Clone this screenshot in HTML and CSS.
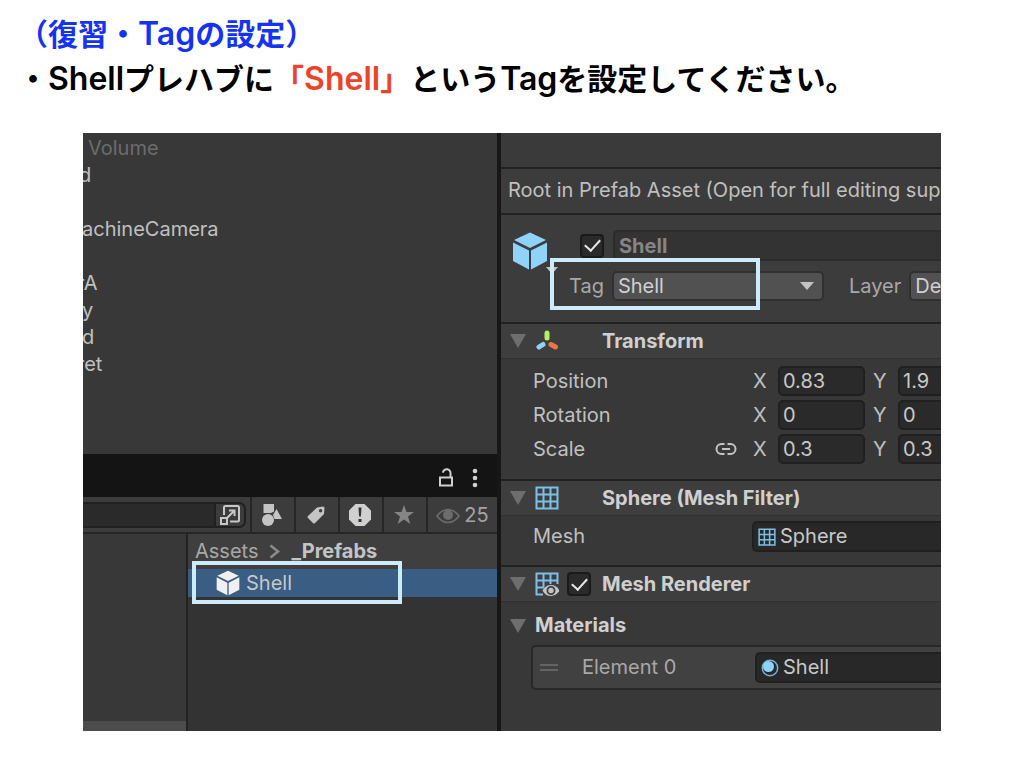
FILE: index.html
```html
<!DOCTYPE html>
<html lang="ja">
<head>
<meta charset="utf-8">
<title>復習・Tagの設定</title>
<link rel="stylesheet" href="styles.css">
</head>
<body>
<svg class="defs" aria-hidden="true">
  <symbol id="cube" viewBox="0 0 36 38">
    <path d="M18 0.5 34 8 18 16 2 8Z"/>
    <path d="M1 10.5 17 18.5V37.5L1 29Z"/>
    <path d="M35 10.5 19 18.5V37.5L35 29Z"/>
  </symbol>
  <symbol id="grid" viewBox="0 0 24 24">
    <path d="M1.5 1.5h21v21h-21zM8.5 1.5v21M15.5 1.5v21M1.5 8.5h21M1.5 15.5h21" fill="none" stroke="currentColor" stroke-width="2"/>
  </symbol>
</svg>
<header class="lesson">
  <h1 class="lesson-title">（復習・<span class="latin">Tag</span>の設定）</h1>
  <p class="lesson-text">・<span class="latin">Shell</span>プレハブに<em class="mark">「<span class="latin">Shell</span>」</em>という<span class="latin">Tag</span>を設定してください。</p>
</header>

<main class="editor">
  <div class="left">
    <ul class="hierarchy">
      <li class="dim">Volume</li>
      <li class="cut">d</li>
      <li></li>
      <li>achineCamera</li>
      <li></li>
      <li class="cut-more">rA</li>
      <li>y</li>
      <li>d</li>
      <li class="cut-more">ret</li>
    </ul>
    <div class="tabbar">
      <button class="plain" aria-label="Lock"><svg width="16" height="20" viewBox="0 0 16 20" fill="none" stroke="#d0d0d0" stroke-width="2"><path d="M2 9.5h12v8H2z"/><path d="M12.5 9V5.5a3.8 3.8 0 0 0-7.6-.8"/></svg></button>
      <button class="plain" aria-label="More"><svg width="6" height="20" viewBox="0 0 6 20" fill="#d0d0d0"><circle cx="3" cy="3" r="2.3"/><circle cx="3" cy="10" r="2.3"/><circle cx="3" cy="17" r="2.3"/></svg></button>
    </div>
    <div class="toolbar">
      <div class="search">
        <input type="search" aria-label="Search assets">
        <button class="plain" aria-label="Open search"><svg width="22" height="22" viewBox="0 0 22 22" fill="none" stroke="#c8c8c8" stroke-width="2"><path d="M5 11V3.500Q5 2 6.500 2H18.500Q20 2 20 3.500V16Q20 17.500 18.500 17.500H11M2 14h6v6H2zM8.500 13.500 15.500 6.500M10 6.500h5.500V12"/></svg></button>
      </div>
      <button class="tool" aria-label="Filter by type"><svg width="22" height="24" viewBox="0 0 22 24" fill="#c4c4c4"><path d="M2.500 1h10.500v7.500L10 10H2.500z"/><circle cx="7" cy="17" r="6"/><path d="M15.500 6 21 16h-7.500L12 12z"/></svg></button>
      <button class="tool" aria-label="Filter by label"><svg width="20" height="20" viewBox="0 0 20 20"><path fill="#c4c4c4" fill-rule="evenodd" d="M11 2.500 17 1.500Q18.500 1.500 18.500 3L18 9 9 18Q8 19 7 18L2 13Q1 12 2 11ZM14.500 4a1.700 1.700 0 1 0 .1 0Z"/></svg></button>
      <button class="tool" aria-label="Warnings"><svg width="24" height="24" viewBox="0 0 24 24"><path fill="#d0d0d0" d="M7.500 1h9L23 7.500v9L16.500 23h-9L1 16.500v-9z"/><path fill="#333" d="M10.500 4.500h3l-.6 9h-1.800zM10.500 16h3v3h-3z"/></svg></button>
      <button class="tool" aria-label="Favorites"><svg width="22" height="22" viewBox="0 0 22 22"><path fill="#858585" d="M11 1 13.500 8H21L15 12.500 17.300 20 11 15.500 4.700 20 7 12.500 1 8h7.500z"/></svg></button>
      <button class="tool hidden-count" aria-label="Hidden items"><svg width="24" height="16" viewBox="0 0 24 16"><path fill="none" stroke="#6c6c6c" stroke-width="1.700" d="M1 8Q6 1.500 12 1.500T23 8Q18 14.500 12 14.500T1 8Z"/><circle cx="12" cy="7" r="5" fill="#6c6c6c"/></svg>25</button>
    </div>
    <div class="project">
      <div class="folders"><div class="scrollbar"></div></div>
      <div class="assets">
        <nav class="crumbs"><a href="#">Assets</a><svg width="11" height="15" viewBox="0 0 11 15" fill="none" stroke="#8c8c8c" stroke-width="2.500"><path d="M1.500 1.500 9 7.500 1.500 13.500"/></svg><b>_Prefabs</b></nav>
        <div class="asset"><svg width="24" height="26" fill="#f0f0f0"><use href="#cube"/></svg>Shell</div>
        <div class="callout callout-asset"></div>
      </div>
    </div>
  </div>

  <div class="inspector">
    <div class="topstrip"></div>
    <p class="notice">Root in Prefab Asset (Open for full editing support)</p>
    <section class="object">
      <svg class="object-icon" width="36" height="38" fill="#8fd3fa"><use href="#cube"/></svg>
      <svg class="object-arrow" width="12" height="8" viewBox="0 0 12 8"><path fill="#c4c4c4" d="M0 0h12L6 7z"/></svg>
      <div class="name-row">
        <input type="checkbox" class="check" aria-label="Active" checked>
        <input type="text" class="name" aria-label="Name" value="Shell">
      </div>
      <div class="tag-row">
        <label for="tag">Tag</label>
        <span class="drop"><select id="tag"><option>Shell</option></select></span>
        <label for="layer">Layer</label>
        <span class="drop"><select id="layer"><option>Default</option></select></span>
      </div>
      <div class="callout callout-tag"></div>
    </section>

    <section class="component">
      <h2 class="head"><span class="fold"></span><svg width="24" height="24" viewBox="0 0 24 24" stroke-linecap="round" stroke-width="5"><path stroke="#b4f25c" d="M12 4v5"/><path stroke="#8fd3fa" d="M8 15.500 4 18"/><path stroke="#f0744a" d="M16 15.500 20.500 18"/></svg><span class="title">Transform</span></h2>
      <div class="vectors">
        <div class="vector"><span class="prop">Position</span><label for="px">X</label><input id="px" value="0.83"><label for="py">Y</label><input id="py" value="1.9"></div>
        <div class="vector"><span class="prop">Rotation</span><label for="rx">X</label><input id="rx" value="0"><label for="ry">Y</label><input id="ry" value="0"></div>
        <div class="vector"><span class="prop">Scale<svg width="22" height="14" viewBox="0 0 22 14" fill="none" stroke="#c4c4c4" stroke-width="2"><path d="M9.500 2H6.500a5 5 0 0 0 0 10h3M12.500 2h3a5 5 0 0 1 0 10h-3M7 7h8"/></svg></span><label for="sx">X</label><input id="sx" value="0.3"><label for="sy">Y</label><input id="sy" value="0.3"></div>
      </div>
    </section>

    <section class="component">
      <h2 class="head"><span class="fold"></span><svg class="blue" width="24" height="24"><use href="#grid"/></svg><span class="title">Sphere (Mesh Filter)</span></h2>
      <div class="mesh"><span>Mesh</span><button class="object-field"><svg class="blue" width="18" height="18"><use href="#grid"/></svg>Sphere</button></div>
    </section>

    <section class="component">
      <h2 class="head"><span class="fold"></span><svg class="blue" width="24" height="24" viewBox="0 0 24 24"><path d="M22.500 12V1.500h-21v21H8M8.500 1.500v14M15.500 1.500V12M1.500 8.500h21M1.500 15.500H9" fill="none" stroke="currentColor" stroke-width="2"/><path d="M7.500 18.500Q10.500 13 16 13T24.500 18.500Q21.500 24 16 24T7.500 18.500Z" fill="#c4c4c4"/><circle cx="16" cy="18.500" r="3.600" fill="#c4c4c4" stroke="#3e3e3e" stroke-width="1.800"/></svg><input type="checkbox" class="check" aria-label="Mesh Renderer enabled" checked><span class="title">Mesh Renderer</span></h2>
      <h3 class="sub"><span class="fold"></span>Materials</h3>
      <div class="element"><span class="grip"></span><span>Element 0</span><button class="object-field"><svg width="18" height="18" viewBox="0 0 18 18"><circle cx="9" cy="9" r="7.700" fill="none" stroke="#76b2d6" stroke-width="1.500"/><circle cx="7.500" cy="7.500" r="5.500" fill="#8fd3fa"/></svg>Shell</button></div>
    </section>
  </div>
</main>
</body>
</html>
```
FILE: styles.css
```css
* { box-sizing: border-box; }
body { margin: 0; background: #fff; color: #000; font-family: Inter, "Noto Sans CJK JP", sans-serif; }
h1, h2, h3, p, ul { margin: 0; padding: 0; }
button, input, select { font: inherit; color: inherit; margin: 0; padding: 0; border: 0; background: none; }
svg { display: block; flex: none; }
.defs { position: absolute; width: 0; height: 0; }

.lesson { padding: 10px 18px 0; font-family: "Noto Sans CJK JP", sans-serif; font-size: 30px; line-height: 45px; font-weight: 700; }
.lesson-title { font-size: inherit; color: #1433f5; }
.latin { font-family: Inter, sans-serif; font-size: 32px; font-weight: 600; line-height: 1; }
.mark { font-style: normal; color: #ec4329; }

.editor { display: grid; grid-template-columns: minmax(0, 1fr) 444px; margin: 33px 83px 0; overflow: hidden; background: #383838; color: #c0c0c0; font-size: 20px; line-height: 27px; }
.left { display: flex; flex-direction: column; min-width: 0; }

.hierarchy { list-style: none; padding: 2px 0 76px; overflow: hidden; }
.hierarchy li { height: 27px; margin-left: -1px; }
.hierarchy .dim { color: #6c6c6c; margin-left: 5px; }
.hierarchy .cut { margin-left: -4px; }
.hierarchy .cut-more { margin-left: -6px; }

.plain { display: grid; place-items: center; }
.tabbar { display: flex; justify-content: flex-end; align-items: center; gap: 18px; height: 43px; padding: 4px 19px 0 0; background: #141414; }

.toolbar { display: flex; align-items: stretch; height: 37px; background: #3c3c3c; border-bottom: 2px solid #262626; }
.search { display: flex; flex: 1; min-width: 0; margin: 5px 4px 4px 0; border: 2px solid #202020; border-left: 0; border-radius: 0 7px 7px 0; background: #3c3c3c; }
.search input { flex: 1; min-width: 0; background: #2a2a2a; border-right: 2px solid #202020; outline: 0; appearance: none; }
.search .plain { width: 28px; }
.tool { display: flex; align-items: center; justify-content: center; width: 44px; padding-right: 2px; border-left: 2px solid #262626; }
.hidden-count { width: 71px; gap: 4px; padding: 2px 0 0; color: #a4a4a4; }

.project { display: grid; grid-template-columns: 104px minmax(0, 1fr); flex: 1; }
.folders { display: flex; align-items: flex-end; border-right: 1px solid #222; }
.scrollbar { flex: 1; height: 10px; background: #4c4c4c; }
.assets { position: relative; background: #333; border-left: 1px solid #222; }
.crumbs { display: flex; align-items: center; gap: 11px; height: 35px; padding-left: 7px; background: #3f3f3f; }
.crumbs a { color: #a8a8a8; text-decoration: none; }
.crumbs b { color: #c4c4c4; }
.asset { display: flex; align-items: center; gap: 6px; height: 28px; padding-left: 28px; background: #3a5d84; color: #c8c8c8; }

.callout { position: absolute; border: 4px solid #cdebfa; pointer-events: none; }
.callout-asset { left: 4px; top: 27px; width: 210px; height: 43px; }
.callout-tag { left: 49px; top: 43px; width: 210px; height: 52px; }

.inspector { border-left: 4px solid #171717; overflow: hidden; padding-bottom: 41px; }
.topstrip { height: 36px; background: #3a3a3a; border-bottom: 2px solid #222; }
.notice { height: 46px; padding: 8px 0 0 7px; white-space: nowrap; background: #3c3c3c; border-bottom: 2px solid #222; }
.object { position: relative; height: 107px; padding-top: 15px; background: #3c3c3c; }
.object-icon { position: absolute; left: 11px; top: 17px; }
.object-arrow { position: absolute; left: 45px; top: 52px; }
.name-row { display: flex; align-items: center; gap: 9px; padding-left: 79px; }
.name { flex: 1; min-width: 0; height: 31px; padding-left: 4px; border: 2px solid #2c2c2c; border-right: 0; border-radius: 5px 0 0 5px; background: #333; color: #858585; font-weight: 700; }
.check { appearance: none; display: grid; place-items: center; flex: none; width: 24px; height: 24px; border: 2px solid #1a1a1a; border-radius: 4px; background: #2a2a2a; }
.check:checked::after { content: ""; width: 13px; height: 7px; margin-bottom: 4px; border: solid #e8e8e8; border-width: 0 0 2px 2px; transform: rotate(-48deg); }
.tag-row { display: flex; align-items: center; margin-top: 10px; padding-left: 68px; white-space: nowrap; color: #a8a8a8; }
.tag-row label { margin-right: 8px; }
.drop { position: relative; flex: none; width: 212px; margin-right: 25px; color: #d0d0d0; }
.drop select { display: block; width: 100%; height: 30px; padding-left: 4px; appearance: none; background: #515151; border: 2px solid #303030; border-radius: 5px; }
.drop::after { content: ""; position: absolute; right: 10px; top: 11px; border: 7px solid transparent; border-top: 8px solid #c4c4c4; border-bottom: 0; }

.component { border-top: 2px solid #212121; }
.head { display: flex; align-items: center; height: 35px; padding-left: 9px; font-size: 20px; color: #d0d0d0; background: #3e3e3e; border-bottom: 1px solid #303030; }
.head svg { margin-right: 43px; }
.head svg:has(+ .check) { margin-right: 8px; }
.head .check { margin-right: 11px; }
.fold { width: 0; flex: none; margin-right: 9px; border: 8px solid transparent; border-top: 14px solid #6e6e6e; border-bottom: 0; }
.blue { color: #7cc0e8; }
.vectors { display: grid; gap: 4px; padding: 7px 0 15px 32px; }
.vector { display: grid; grid-template-columns: 220px 25px 87px 33px 87px; align-items: center; }
.vector label:nth-of-type(2) { padding-left: 8px; }
.vector input { width: 100%; height: 30px; padding-left: 3px; background: #2a2a2a; border: 2px solid #202020; border-radius: 5px; color: #c8c8c8; }
.prop { display: flex; align-items: center; justify-content: space-between; padding-right: 16px; }
.mesh { display: grid; grid-template-columns: 219px minmax(0, 1fr); align-items: center; padding: 5px 0 13px 32px; }
.object-field { display: flex; align-items: center; gap: 4px; height: 31px; padding-left: 4px; background: #282828; border: 2px solid #202020; border-right: 0; border-radius: 5px 0 0 5px; color: #c8c8c8; }
.sub { display: flex; align-items: center; height: 43px; padding: 4px 0 0 9px; font-size: 20px; color: #d0d0d0; }
.element { display: grid; grid-template-columns: 42px 173px minmax(0, 1fr); align-items: center; height: 45px; margin-left: 30px; padding-left: 7px; background: #414141; border: 2px solid #282828; border-right: 0; border-radius: 5px 0 0 5px; color: #a8a8a8; }
.grip { width: 18px; height: 7px; border: solid #646464; border-width: 2px 0; }
```
